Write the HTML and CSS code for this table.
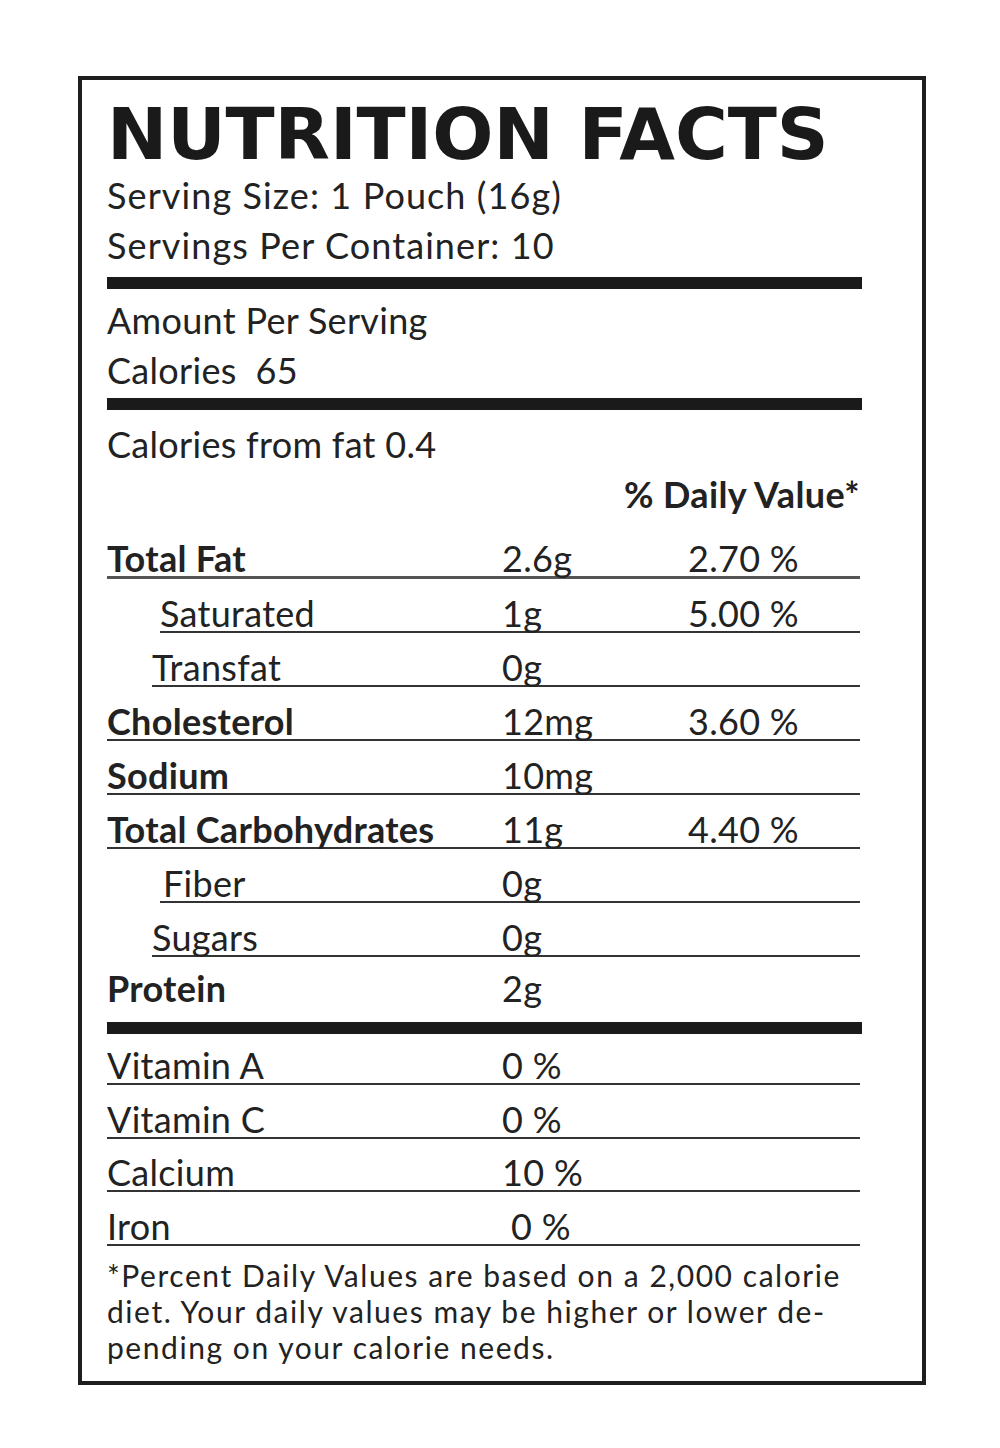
FILE: index.html
```html
<!DOCTYPE html>
<html>
<head>
<meta charset="utf-8">
<link rel="stylesheet" href="styles.css">
</head>
<body>
<div class="label">
  <h1 class="title">NUTRITION FACTS</h1>
  <div class="line line-top">Serving Size: 1 Pouch (16g)</div>
  <div class="line line-top">Servings Per Container: 10</div>
  <div class="bar bar-1"></div>
  <div class="line line-amount">Amount Per Serving</div>
  <div class="line">Calories&nbsp; 65</div>
  <div class="bar bar-2"></div>
  <div class="line line-fat">Calories from fat 0.4</div>
  <div class="dv-head">% Daily Value*</div>

  <div class="row bold first"><span>Total Fat</span><span>2.6g</span><span>2.70 %</span></div>
  <div class="row indent-a"><span>Saturated</span><span>1g</span><span>5.00 %</span></div>
  <div class="row indent-b"><span>Transfat</span><span>0g</span><span></span></div>
  <div class="row bold"><span>Cholesterol</span><span>12mg</span><span>3.60 %</span></div>
  <div class="row bold"><span>Sodium</span><span>10mg</span><span></span></div>
  <div class="row bold"><span>Total Carbohydrates</span><span>11g</span><span>4.40 %</span></div>
  <div class="row indent-c"><span>Fiber</span><span>0g</span><span></span></div>
  <div class="row indent-b"><span>Sugars</span><span>0g</span><span></span></div>
  <div class="row bold protein"><span>Protein</span><span>2g</span><span></span></div>

  <div class="bar bar-3"></div>

  <div class="row vit first-vit"><span>Vitamin A</span><span>0 %</span><span></span></div>
  <div class="row vit"><span>Vitamin C</span><span>0 %</span><span></span></div>
  <div class="row vit"><span>Calcium</span><span>10 %</span><span></span></div>
  <div class="row vit"><span>Iron</span><span class="iron-val">0 %</span><span></span></div>

  <p class="note">*Percent Daily Values are based on a 2,000 calorie<br>diet. Your daily values may be higher or lower de-<br>pending on your calorie needs.</p>
</div>
</body>
</html>
```
FILE: styles.css
```css
html, body {
  margin: 0;
  padding: 0;
  background: #ffffff;
}

body {
  font-family: Lato, "Open Sans", sans-serif;
  color: #222222;
}

.label {
  box-sizing: border-box;
  margin: 76px 0 0 78px;
  width: 848px;
  border: 4px solid #1e1e1e;
  padding: 18px 60px 16px 25px;
}

.title {
  margin: 0;
  font-family: "DejaVu Sans", sans-serif;
  font-weight: 900;
  font-size: 72px;
  line-height: 72px;
  height: 72px;
  color: #1a1a1a;
  letter-spacing: -0.1px;
  white-space: nowrap;
}

.line {
  font-size: 36px;
  line-height: 50px;
  height: 50px;
  letter-spacing: 0.3px;
  white-space: nowrap;
}

.line-top {
  letter-spacing: 1.1px;
}

.bar {
  height: 12px;
  background: #1a1a1a;
}

.bar-1 { margin: 7px 0 0; }
.bar-2 { margin: 3px 0 0; }
.bar-3 { margin: 16px 0 0; }

.line-amount { margin-top: 6px; }
.line-fat { margin-top: 9px; }

.dv-head {
  font-size: 36px;
  font-weight: bold;
  line-height: 50px;
  height: 50px;
  letter-spacing: 0.4px;
  text-align: right;
  padding-right: 2px;
  white-space: nowrap;
}

.row {
  --indent: 0px;
  box-sizing: border-box;
  display: grid;
  grid-template-columns: calc(395px - var(--indent)) 186px 1fr;
  align-items: end;
  height: 54px;
  margin-left: var(--indent);
  margin-right: 2px;
  border-bottom: 2px solid #333333;
  font-size: 36px;
  line-height: 1;
  letter-spacing: 0.3px;
  white-space: nowrap;
}

.row > span { display: block; }

.row.first { margin-top: 6px; border-bottom-width: 3px; border-bottom-color: #555555; }

.row.bold > span:first-child { font-weight: bold; }

.indent-a { --indent: 53px; }
.indent-b { --indent: 45px; }
.indent-c { --indent: 53px; }
.indent-c > span:first-child { padding-left: 3px; }

.row.protein {
  height: 49px;
  border-bottom: none;
}

.row.first-vit { height: 51px; }
.row.vit + .row.vit { height: 53.5px; }

.iron-val { padding-left: 9px; }

.note {
  margin: 11px 0 0;
  font-size: 30px;
  line-height: 36px;
  letter-spacing: 1.55px;
  white-space: nowrap;
}
```
